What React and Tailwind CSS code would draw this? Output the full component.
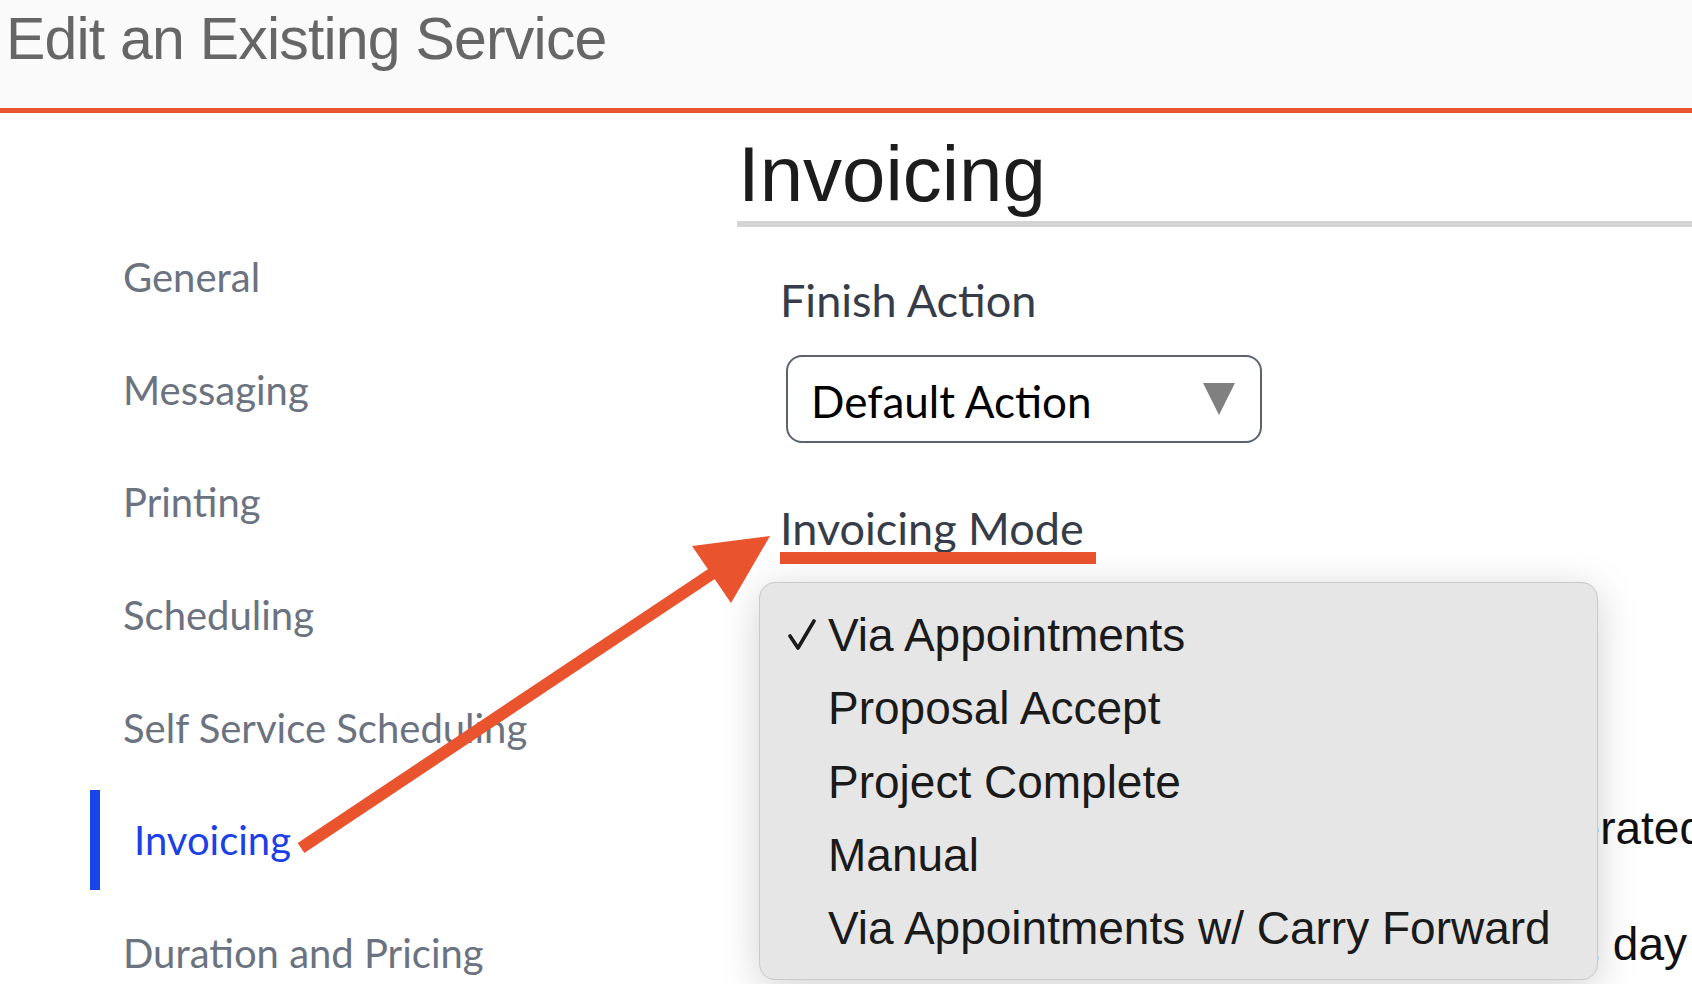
import React from "react";

const navItems = [
  "General",
  "Messaging",
  "Printing",
  "Scheduling",
  "Self Service Scheduling",
  "Invoicing",
  "Duration and Pricing",
];

const modes = [
  "Via Appointments",
  "Proposal Accept",
  "Project Complete",
  "Manual",
  "Via Appointments w/ Carry Forward",
];

export default function App() {
  return (
    <div className="relative w-[1692px] h-[984px] overflow-hidden bg-white">
      {/* Header */}
      <header className="h-[113px] bg-[#fafafa] border-b-[5px] border-[#e9532e]">
        <h1 className="pt-[10px] pl-[6px] font-['Liberation_Sans',Arial,sans-serif] text-[59px] leading-none tracking-[-0.8px] text-[#666666] whitespace-nowrap">
          Edit an Existing Service
        </h1>
      </header>

      <div className="flex">
        {/* Sidebar */}
        <nav className="w-[737px] shrink-0 pt-[108px] font-['Lato',sans-serif]">
          {navItems.map((item) =>
            item === "Invoicing" ? (
              <div key={item} className="h-[112.6px] flex items-center pl-[90px]">
                <div className="w-[10px] h-[100px] bg-[#1745e8]" />
                <span className="ml-[34px] text-[40px] leading-none text-[#1b40e6] whitespace-nowrap">
                  {item}
                </span>
              </div>
            ) : (
              <div key={item} className="h-[112.6px] flex items-center pl-[123px]">
                <span className="text-[40px] leading-none text-[#6b7280] whitespace-nowrap">
                  {item}
                </span>
              </div>
            )
          )}
        </nav>

        {/* Main content */}
        <main className="flex-1 min-w-0">
          <div className="mt-[22px] pb-[8px] border-b-[6px] border-[#d4d4d4]">
            <h2 className="ml-[1px] font-['Liberation_Sans',Arial,sans-serif] text-[78px] leading-none text-[#1c1c1c]">
              Invoicing
            </h2>
          </div>

          <div className="pl-[43px]">
            <div className="mt-[51px] font-['Lato',sans-serif] text-[45px] leading-none text-[#363c48]">
              Finish Action
            </div>

            <div className="mt-[32px] ml-[6px] w-[476px] h-[88px] border-2 border-[#5b6270] rounded-[16px] flex items-center justify-between pl-[23px] pr-[25px]">
              <span className="pt-[4px] font-['Lato',sans-serif] text-[44px] leading-none text-black">
                Default Action
              </span>
              <svg width="32" height="32" viewBox="0 0 32 32">
                <polygon points="0,0 32,0 16,32" fill="#808080" />
              </svg>
            </div>

            <div className="mt-[63px] inline-flex flex-col">
              <span className="font-['Lato',sans-serif] text-[45px] leading-none text-[#363c48] whitespace-nowrap">
                Invoicing Mode
              </span>
              <div className="mt-[1px] w-[316px] h-[12px] bg-[#e9532e]" />
            </div>

            <div className="mt-[20px] ml-[6px] w-[476px] h-[88px] border-2 border-[#5b6270] rounded-[16px]" />

            <div className="mt-[133px] ml-[457px] font-['Liberation_Sans',Arial,sans-serif] text-[46px] leading-none text-[#111] whitespace-nowrap">
              Invoices are generated on completion
            </div>
            <div className="mt-[70px] ml-[416px] font-['Liberation_Sans',Arial,sans-serif] text-[46px] leading-none text-[#111] whitespace-nowrap">
              Invoice due within 1 day
            </div>
          </div>
        </main>
      </div>

      {/* Open dropdown menu */}
      <div className="absolute left-[759px] top-[582px] w-[839px] h-[398px] bg-[#e6e6e6] border border-[#c9c9c9] rounded-[16px] shadow-[0_8px_40px_rgba(0,0,0,0.18)] pt-[15.5px] font-['Liberation_Sans',Arial,sans-serif] text-[46px] text-[#1a1a1a]">
        {modes.map((m, i) => (
          <div key={m} className="flex items-center h-[73.25px] pl-[28px]">
            <div className="w-[40px] h-[32px] flex items-center">
              {i === 0 && (
                <svg width="28" height="32" viewBox="0 0 28 32">
                  <polyline
                    points="2,17 10,29 26,2"
                    fill="none"
                    stroke="#1a1a1a"
                    strokeWidth="3.6"
                    strokeLinecap="round"
                    strokeLinejoin="round"
                  />
                </svg>
              )}
            </div>
            <span className="leading-none whitespace-nowrap">{m}</span>
          </div>
        ))}
      </div>

      {/* Annotation arrow */}
      <svg
        className="absolute left-0 top-0 pointer-events-none"
        width="1692"
        height="984"
        viewBox="0 0 1692 984"
      >
        <line x1="301" y1="848" x2="716" y2="571" stroke="#e9532e" strokeWidth="12" />
        <polygon points="770,536 692,546 731,603" fill="#e9532e" />
      </svg>
    </div>
  );
}
